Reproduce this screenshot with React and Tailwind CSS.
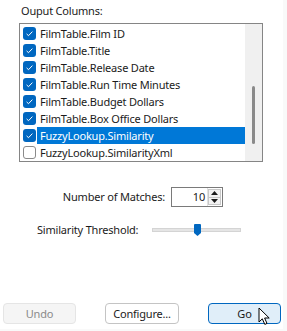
import React from 'react';

const ROWS = [
  { label: 'FilmTable.Film ID', checked: true },
  { label: 'FilmTable.Title', checked: true },
  { label: 'FilmTable.Release Date', checked: true },
  { label: 'FilmTable.Run Time Minutes', checked: true },
  { label: 'FilmTable.Budget Dollars', checked: true },
  { label: 'FilmTable.Box Office Dollars', checked: true },
  { label: 'FuzzyLookup.Similarity', checked: true, selected: true },
  { label: 'FuzzyLookup.SimilarityXml', checked: false },
];

function CheckBox({ checked }) {
  if (!checked) {
    return (
      <svg width="13" height="13" viewBox="0 0 13 13" className="shrink-0">
        <rect x="0.5" y="0.5" width="12" height="12" rx="2.5" fill="#fff" stroke="#8a8a8a" />
      </svg>
    );
  }
  return (
    <svg width="13" height="13" viewBox="0 0 13 13" className="shrink-0">
      <rect x="0" y="0" width="13" height="13" rx="3" fill="#0067c0" />
      <path d="M3.6 6.9 L5.5 8.7 L9.4 4.6" fill="none" stroke="#fff" strokeWidth="1" />
    </svg>
  );
}

function Row({ row }) {
  return (
    <div className="flex items-center h-[17px]">
      <div className="w-[17px] pl-[3px] flex items-center">
        <CheckBox checked={row.checked} />
      </div>
      <div
        className={`flex-1 h-full flex items-center pl-[3px] ${
          row.selected ? 'bg-[#0078d7] text-white' : 'text-[#1b1b1b]'
        }`}
      >
        {row.label}
      </div>
    </div>
  );
}

function Spinner() {
  return (
    <div className="w-[52px] h-[20px] border border-[#7a7a7a] bg-white flex items-center">
      <div className="flex-1 text-right pr-[2px] text-[#1b1b1b]">10</div>
      <div className="w-[15px] h-full flex flex-col border-l border-[#e0e0e0] py-[1px] pr-[1px]">
        <div className="flex-1 flex items-center justify-center border border-[#c8c8c8] bg-[#f3f3f3]">
          <svg width="7" height="4" viewBox="0 0 7 4"><path d="M0 4 L3.5 0 L7 4 Z" fill="#1b1b1b" /></svg>
        </div>
        <div className="flex-1 flex items-center justify-center border border-t-0 border-[#c8c8c8] bg-[#f3f3f3]">
          <svg width="7" height="4" viewBox="0 0 7 4"><path d="M0 0 L3.5 4 L7 0 Z" fill="#1b1b1b" /></svg>
        </div>
      </div>
    </div>
  );
}

function Slider() {
  return (
    <div className="relative w-[89px] h-[12px] flex items-center">
      <div className="w-full h-[4px] bg-[#e5e5e5] border border-[#d4d4d4]" />
      <svg width="7" height="12" viewBox="0 0 7 12" className="absolute left-[42px] top-0">
        <path d="M0 1 Q0 0 1 0 L6 0 Q7 0 7 1 L7 9 L3.5 12 L0 9 Z" fill="#0067c0" />
      </svg>
    </div>
  );
}

function Cursor() {
  return (
    <svg width="13" height="19" viewBox="0 0 13 19" className="absolute left-[49px] top-[3px]">
      <path
        d="M1 1 L1 15 L4.3 11.8 L6.8 17.4 L9 16.4 L6.6 11 L11.2 11 Z"
        fill="#fff"
        stroke="#000"
        strokeWidth="1"
        strokeLinejoin="round"
      />
    </svg>
  );
}

export default function App() {
  return (
    <div
      className="w-[287px] h-[331px] bg-[#f9f9f9] text-[11px] leading-[16px] tracking-[-0.2px]"
      style={{ fontFamily: '"Noto Sans", "Open Sans", sans-serif' }}
    >
      <div className="w-[283px] h-[329px] bg-white flex flex-col">
        {/* Output columns */}
        <div className="pl-[21px] pt-[3px] h-[23px] text-[#1b1b1b]">Ouput Columns:</div>
        <div className="ml-[19px] w-[244px] h-[139px] border border-[#858585] flex">
          <div className="flex-1 pt-[1px]">
            {ROWS.map((row) => (
              <Row key={row.label} row={row} />
            ))}
          </div>
          <div className="w-[17px] bg-[#f0f0f0] relative">
            <div className="absolute left-[7px] top-[62px] w-[3px] h-[58px] rounded-full bg-[#8a8a8a]" />
          </div>
        </div>

        {/* Number of matches */}
        <div className="flex items-center mt-[25px] gap-[6px]">
          <span className="w-[165px] text-right text-[#1b1b1b]">Number of Matches:</span>
          <Spinner />
        </div>

        {/* Similarity threshold */}
        <div className="flex items-center mt-[15px] pl-[37px]">
          <span className="w-[115px] text-[#1b1b1b]">Similarity Threshold:</span>
          <Slider />
        </div>

        {/* Buttons */}
        <div className="mt-auto mb-[5px] flex items-center pl-[3px] gap-[29px]">
          <button className="w-[73px] h-[21px] rounded-[4px] border border-[#e5e5e5] bg-[#f5f5f5] text-[#8a8a8a]">
            Undo
          </button>
          <button className="w-[74px] h-[21px] rounded-[4px] border border-[#c4c4c4] bg-white text-[#1b1b1b]">
            Configure...
          </button>
          <button className="relative w-[73px] h-[21px] rounded-[4px] border border-[#0067c0] bg-[#e0eef9] text-[#1b1b1b]">
            Go
            <Cursor />
          </button>
        </div>
      </div>
    </div>
  );
}
